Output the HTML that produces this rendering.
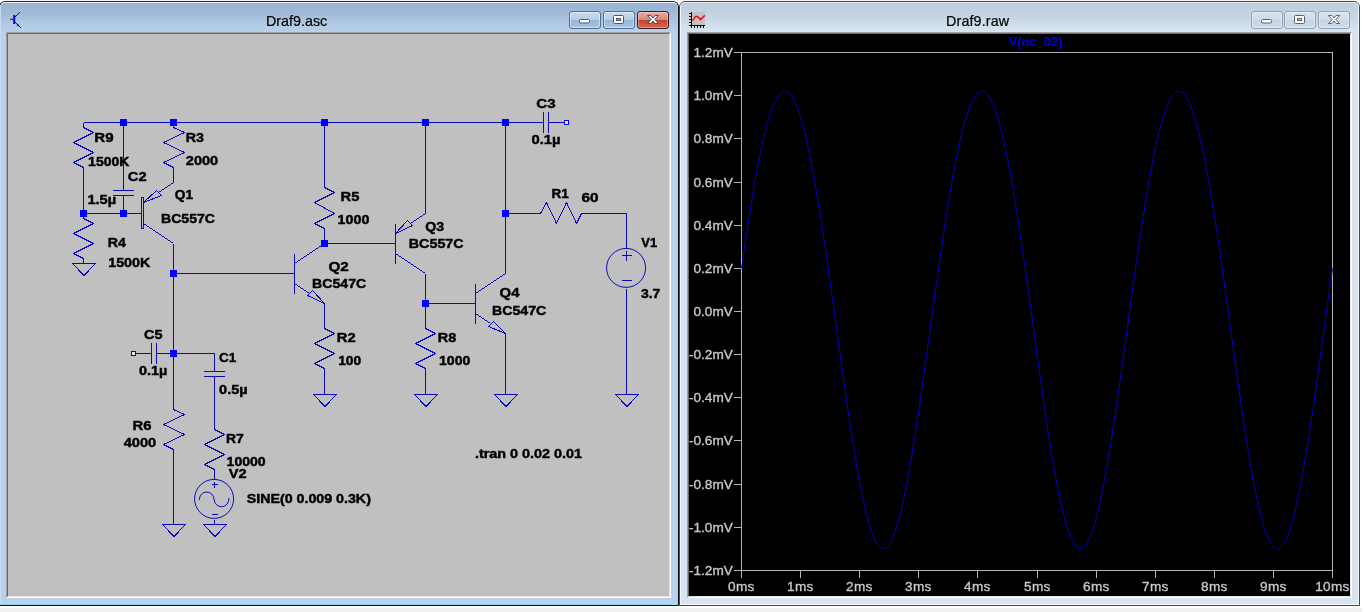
<!DOCTYPE html>
<html lang="en">
<head>
<meta charset="utf-8">
<title>LTspice - Draf9</title>
<style>
html,body{margin:0;padding:0;}
body{width:1364px;height:612px;overflow:hidden;position:relative;background:#fff;
 font-family:"Liberation Sans",sans-serif;}
#mdi{position:absolute;left:0;top:608px;width:1362px;height:4px;background:#f0f0f0;}
#mditop{position:absolute;left:0;top:0;width:1360px;height:1px;background:#f6f6f6;}
.win{position:absolute;top:1px;height:605px;box-sizing:border-box;border:1px solid #000;
 border-radius:6px 6px 0 0;overflow:hidden;}
#w1{left:-1px;width:680px;background:#b9d1ea;border-color:#26292d #101418 #101418;}
#w2{left:679px;width:681px;background:#d7e4f2;border-color:#45494f;}
.hl{position:absolute;left:0;top:0;right:0;bottom:0;border-radius:5px 5px 0 0;box-sizing:border-box;}
#w1 .hl{border:1px solid #8fd6f4;border-top-color:#eef5fb;border-left-color:#c8dcf0;border-right:1px solid #8fd6f4;}
#w2 .hl{border:1px solid #f4f8fc;border-top-color:#e6edf5;}
.tb{position:absolute;left:1px;right:1px;top:1px;height:29px;}
#w1 .tb{background:linear-gradient(#98b3d2 0%,#a0bad8 35%,#b0c9e4 70%,#bad1eb 100%);}
#w2 .tb{background:linear-gradient(#becddc 0%,#c5d3e1 40%,#d0deeb 75%,#d8e5f2 100%);}
.title{position:absolute;top:10.5px;font-size:14.3px;line-height:16px;color:#000;white-space:nowrap;-webkit-text-stroke:0.2px #000;}
.edge{position:absolute;top:30px;left:6px;width:665px;height:566px;box-sizing:border-box;
 border:1px solid;border-color:#a0a0a0 #fff #fff #a0a0a0;}
.edge>i{display:block;width:100%;height:100%;box-sizing:border-box;border:1px solid;
 border-color:#696969 #e3e3e3 #e3e3e3 #696969;}
#w2 .edge{left:7px;}
#w1 .edge>i{background:#c0c0c0;}
#w2 .edge>i{background:#000;}
.btn{position:absolute;top:9px;height:18px;box-sizing:border-box;border:1px solid;border-radius:3px;}
.btn svg{position:absolute;left:0;top:0;}
#w1 .btn{border-color:#4f6f96;background:linear-gradient(#c9dbef 0%,#b4cce6 48%,#9ab6d7 52%,#aac4e2 100%);
 box-shadow:inset 0 0 0 1px rgba(255,255,255,.45);}
#w1 .btn.x{border-color:#43161a;background:linear-gradient(#e9ac9f 0%,#db8674 48%,#c2452c 52%,#d06a4f 100%);
 box-shadow:inset 0 0 0 1px rgba(255,255,255,.35);}
#w2 .btn{border-color:#93a1b3;background:linear-gradient(#d6e2ee 0%,#cfdcea 48%,#c6d5e6 52%,#cedbea 100%);
 box-shadow:inset 0 0 0 1px rgba(255,255,255,.4);}
#ov{position:absolute;left:0;top:0;will-change:transform;}
.title{will-change:transform;}
</style>
</head>
<body>
<div id="mdi"></div>
<div id="mditop"></div>

<div class="win" id="w1">
 <div class="tb"></div>
 <div class="hl"></div>
 <svg style="position:absolute;left:9px;top:9px" width="16" height="20" viewBox="0 0 16 20">
  <g stroke="#0808c4" fill="none" stroke-width="1">
   <path d="M1 8.3H4.2"/><path d="M5.2 4V13" stroke-width="2"/>
   <path d="M6 6L11 1.2"/><path d="M6 11L12 17"/>
  </g>
  <path d="M10.6 15.8L7.4 14.4L9 12.6Z" fill="#0808c4"/>
 </svg>
 <div class="title" style="left:266px">Draf9.asc</div>
 <div class="btn" style="left:569px;width:32px">
  <svg width="30" height="16"><rect x="9.5" y="7.5" width="10" height="3.5" rx="1" fill="#fff" stroke="#49576a"/></svg></div>
 <div class="btn" style="left:603px;width:32px">
  <svg width="30" height="16"><rect x="9.5" y="3.5" width="10" height="8" rx="1" fill="#fff" stroke="#49576a"/>
  <rect x="12.5" y="6.5" width="4" height="2" fill="#8ea6c4" stroke="#49576a"/></svg></div>
 <div class="btn x" style="left:637px;width:32px">
  <svg width="30" height="16"><path d="M9.5 3.5h3.4l2.1 2.5 2.1-2.5h3.4l-3.7 4 3.7 4h-3.4l-2.1-2.5-2.1 2.5h-3.4l3.7-4z" fill="#fff" stroke="#4a4f5c" stroke-width="1" stroke-linejoin="round"/></svg></div>
 <div class="edge"><i></i></div>
</div>

<div class="win" id="w2">
 <div class="tb"></div>
 <div class="hl"></div>
 <svg style="position:absolute;left:9px;top:10px" width="17" height="17" viewBox="0 0 17 17" shape-rendering="crispEdges">
  <rect x="3" y="0" width="13" height="13" fill="#c3c3c3"/>
  <path d="M2.5 0V14M0 13.5H16" stroke="#000" fill="none"/>
  <path d="M0 1.5H2M0 4.5H2M0 7.5H2M0 10.5H2M2.5 14V16M5.5 14V16M8.5 14V16M11.5 14V16M14.5 14V16" stroke="#000" fill="none"/>
  <path d="M3.5 8.6L6.5 4.6L8.5 4.6L11.5 7.6L15.8 3.4" stroke="#e8101c" stroke-width="1.5" fill="none" shape-rendering="auto"/>
 </svg>
 <div class="title" style="left:266.4px;letter-spacing:0.15px">Draf9.raw</div>
 <div class="btn" style="left:571px;width:32px">
  <svg width="30" height="16"><rect x="9.5" y="7.5" width="10" height="3.5" rx="1" fill="#fff" stroke="#5c6370"/></svg></div>
 <div class="btn" style="left:604px;width:32px">
  <svg width="30" height="16"><rect x="9.5" y="3.5" width="10" height="8" rx="1" fill="#fff" stroke="#5c6370"/>
  <rect x="12.5" y="6.5" width="4" height="2" fill="#c3cfdd" stroke="#5c6370"/></svg></div>
 <div class="btn x" style="left:638px;width:32px">
  <svg width="30" height="16"><path d="M9.5 3.5h3.4l2.1 2.5 2.1-2.5h3.4l-3.7 4 3.7 4h-3.4l-2.1-2.5-2.1 2.5h-3.4l3.7-4z" fill="#fff" stroke="#5c6370" stroke-width="1" stroke-linejoin="round"/></svg></div>
 <div class="edge"><i></i></div>
</div>

<svg id="ov" width="1364" height="612" viewBox="0 0 1364 612">
<g fill="none" stroke="#0a0ab8" stroke-width="1" stroke-linejoin="bevel" shape-rendering="crispEdges">
<path d="M83.5 122.5 L525.5 122.5" />
<path d="M123.5 122.5 L123.5 172.5" />
<path d="M83.5 122.5 L83.5 127.5 L93.5 132.5 L73.5 142.5 L93.5 152.5 L73.5 162.5 L83.5 167.5 L83.5 172.5" />
<path d="M83.5 172.5 L83.5 213.5" />
<path d="M83.5 213.5 L133.5 213.5" />
<path d="M123.5 172.5 L123.5 190.5" />
<path d="M123.5 195.5 L123.5 213.5" />
<path d="M113.0 190.5 L134.0 190.5" />
<path d="M113.0 195.5 L134.0 195.5" />
<path d="M83.5 213.5 L83.5 218.5 L93.5 223.5 L73.5 233.5 L93.5 243.5 L73.5 253.5 L83.5 258.5 L83.5 263.5" />
<path d="M72.5 263.5 L95.5 263.5 L84.0 275.5Z" />
<path d="M173.5 122.5 L173.5 127.5 L184.5 132.5 L163.5 142.5 L184.5 152.5 L163.5 162.5 L173.5 167.5 L173.5 172.5" />
<path d="M173.5 172.5 L173.5 182.5" />
<path d="M133.5 213.5 L141.5 213.5" />
<rect x="141.5" y="197.5" width="2.0" height="31.0"/>
<path d="M158.5 192.5 L173.5 182.5" />
<path d="M143.5 223.5 L173.5 243.5" />
<path d="M143.5 202.5 L156.5 190.5 L161.5 195.5Z" />
<path d="M173.5 243.5 L173.5 404.5" />
<path d="M173.5 273.5 L284.5 273.5" />
<path d="M284.5 273.5 L294.5 273.5" />
<path d="M294.5 253.5 L294.5 293.5" />
<path d="M294.5 263.5 L324.5 243.5" />
<path d="M294.5 283.5 L309.5 293.5" />
<path d="M324.5 303.5 L307.5 295.5 L312.5 290.5Z" />
<path d="M324.5 122.5 L324.5 182.5" />
<path d="M324.5 182.5 L324.5 187.5 L334.5 192.5 L314.5 202.5 L334.5 213.5 L314.5 223.5 L324.5 228.5 L324.5 233.5" />
<path d="M324.5 233.5 L324.5 243.5" />
<path d="M324.5 243.5 L385.5 243.5" />
<path d="M385.5 243.5 L395.5 243.5" />
<path d="M395.5 223.5 L395.5 263.5" />
<path d="M410.5 223.5 L425.5 213.5" />
<path d="M395.5 253.5 L425.5 273.5" />
<path d="M395.5 233.5 L407.5 220.5 L412.5 225.5Z" />
<path d="M425.5 122.5 L425.5 213.5" />
<path d="M425.5 273.5 L425.5 323.5" />
<path d="M425.5 303.5 L465.5 303.5" />
<path d="M465.5 303.5 L475.5 303.5" />
<path d="M475.5 283.5 L475.5 323.5" />
<path d="M475.5 293.5 L505.5 273.5" />
<path d="M475.5 313.5 L490.5 323.5" />
<path d="M505.5 333.5 L488.5 326.5 L493.5 321.5Z" />
<path d="M505.5 122.5 L505.5 273.5" />
<path d="M505.5 333.5 L505.5 394.5" />
<path d="M494.5 394.5 L517.5 394.5 L506.0 406.5Z" />
<path d="M324.5 303.5 L324.5 323.5" />
<path d="M324.5 323.5 L324.5 328.5 L334.5 333.5 L314.5 343.5 L334.5 353.5 L314.5 363.5 L324.5 368.5 L324.5 373.5" />
<path d="M324.5 373.5 L324.5 394.5" />
<path d="M313.5 394.5 L336.5 394.5 L325.0 406.5Z" />
<path d="M425.5 323.5 L425.5 328.5 L435.5 333.5 L415.5 343.5 L435.5 353.5 L415.5 363.5 L425.5 368.5 L425.5 373.5" />
<path d="M425.5 373.5 L425.5 394.5" />
<path d="M414.5 394.5 L437.5 394.5 L426.0 406.5Z" />
<path d="M525.5 122.5 L543.5 122.5" />
<path d="M548.5 122.5 L566.5 122.5" />
<path d="M543.5 112.0 L543.5 133.0" />
<path d="M548.5 112.0 L548.5 133.0" />
<path d="M505.5 213.5 L535.5 213.5" />
<path d="M535.5 213.5 L540.5 213.5 L546.5 202.5 L556.5 223.5 L566.5 202.5 L576.5 223.5 L581.5 213.5 L586.5 213.5" />
<path d="M586.5 213.5 L626.5 213.5 L626.5 243.5" />
<circle cx="626.1" cy="267.9" r="19.5" shape-rendering="auto"/>
<path d="M626.5 243.5 L626.5 248.5" />
<path d="M626.5 288.5 L626.5 293.5" />
<path d="M621.5 255.5 L631.5 255.5" />
<path d="M626.5 250.5 L626.5 260.5" />
<path d="M621.5 280.5 L631.5 280.5" />
<path d="M626.5 293.5 L626.5 394.5" />
<path d="M615.5 394.5 L638.5 394.5 L627.0 406.5Z" />
<path d="M133.5 353.5 L151.5 353.5" />
<path d="M156.5 353.5 L173.5 353.5" />
<path d="M151.5 343.0 L151.5 364.0" />
<path d="M156.5 343.0 L156.5 364.0" />
<path d="M173.5 353.5 L214.5 353.5" />
<path d="M214.5 353.5 L214.5 371.5" />
<path d="M214.5 376.5 L214.5 394.5" />
<path d="M204.0 371.5 L225.0 371.5" />
<path d="M204.0 376.5 L225.0 376.5" />
<path d="M214.5 394.5 L214.5 424.5" />
<path d="M214.5 424.5 L214.5 429.5 L224.5 434.5 L204.5 444.5 L224.5 454.5 L204.5 464.5 L214.5 469.5 L214.5 474.5" />
<circle cx="214.1" cy="498.9" r="19.5" shape-rendering="auto"/>
<path d="M214.5 474.5 L214.5 479.5" />
<path d="M214.5 519.5 L214.5 524.5" />
<path d="M211.5 484.5 L217.5 484.5" />
<path d="M214.5 481.5 L214.5 487.5" />
<path d="M211.5 514.5 L217.5 514.5" />
<path shape-rendering="auto" d="M199.3 500.1 a7.4 7.8 0 1 1 14.8 -0.6 a7.4 8.0 0 1 0 14.8 -1.4"/>
<path d="M203.5 524.5 L226.5 524.5 L215.0 536.5Z" />
<path d="M173.5 404.5 L173.5 409.5 L184.5 414.5 L163.5 424.5 L184.5 434.5 L163.5 444.5 L173.5 449.5 L173.5 454.5" />
<path d="M173.5 454.5 L173.5 524.5" />
<path d="M162.5 524.5 L185.5 524.5 L174.0 536.5Z" />
<rect x="120" y="119" width="7" height="7" fill="#0000ff" stroke="none"/>
<rect x="170" y="119" width="7" height="7" fill="#0000ff" stroke="none"/>
<rect x="321" y="119" width="7" height="7" fill="#0000ff" stroke="none"/>
<rect x="422" y="119" width="7" height="7" fill="#0000ff" stroke="none"/>
<rect x="502" y="119" width="7" height="7" fill="#0000ff" stroke="none"/>
<rect x="80" y="210" width="7" height="7" fill="#0000ff" stroke="none"/>
<rect x="120" y="210" width="7" height="7" fill="#0000ff" stroke="none"/>
<rect x="170" y="270" width="7" height="7" fill="#0000ff" stroke="none"/>
<rect x="321" y="240" width="7" height="7" fill="#0000ff" stroke="none"/>
<rect x="422" y="300" width="7" height="7" fill="#0000ff" stroke="none"/>
<rect x="502" y="210" width="7" height="7" fill="#0000ff" stroke="none"/>
<rect x="170" y="350" width="7" height="7" fill="#0000ff" stroke="none"/>
<rect x="564.5" y="120.5" width="4" height="4" fill="#e8e8ff" stroke="#0000ff"/>
<rect x="131.5" y="351.5" width="4" height="4" fill="#e8e8ff" stroke="#0000ff"/>
</g>
<g font-family="'Liberation Sans',sans-serif" font-weight="bold" font-size="13.3px" fill="#000" stroke="#000" stroke-width="0.45" lengthAdjust="spacingAndGlyphs">
<text x="94.3" y="141.7" textLength="19.2" lengthAdjust="spacingAndGlyphs">R9</text>
<text x="88.1" y="165.5" textLength="41.3" lengthAdjust="spacingAndGlyphs">1500K</text>
<text x="185.8" y="141.7" textLength="18.2" lengthAdjust="spacingAndGlyphs">R3</text>
<text x="185.8" y="164.5" textLength="32.4" lengthAdjust="spacingAndGlyphs">2000</text>
<text x="127.8" y="181.4" textLength="18.8" lengthAdjust="spacingAndGlyphs">C2</text>
<text x="87.4" y="203.6" textLength="28.8" lengthAdjust="spacingAndGlyphs">1.5µ</text>
<text x="174.8" y="199.3" textLength="18.2" lengthAdjust="spacingAndGlyphs">Q1</text>
<text x="161.0" y="223.1" textLength="54.0" lengthAdjust="spacingAndGlyphs">BC557C</text>
<text x="107.8" y="247.3" textLength="18.2" lengthAdjust="spacingAndGlyphs">R4</text>
<text x="108.2" y="266.5" textLength="42.1" lengthAdjust="spacingAndGlyphs">1500K</text>
<text x="340.6" y="201.1" textLength="18.8" lengthAdjust="spacingAndGlyphs">R5</text>
<text x="337.6" y="224.0" textLength="31.8" lengthAdjust="spacingAndGlyphs">1000</text>
<text x="425.3" y="230.5" textLength="18.8" lengthAdjust="spacingAndGlyphs">Q3</text>
<text x="408.8" y="248.1" textLength="54.8" lengthAdjust="spacingAndGlyphs">BC557C</text>
<text x="328.5" y="271.4" textLength="20.3" lengthAdjust="spacingAndGlyphs">Q2</text>
<text x="312.0" y="287.6" textLength="54.2" lengthAdjust="spacingAndGlyphs">BC547C</text>
<text x="499.6" y="297.4" textLength="19.8" lengthAdjust="spacingAndGlyphs">Q4</text>
<text x="491.9" y="315.2" textLength="54.4" lengthAdjust="spacingAndGlyphs">BC547C</text>
<text x="336.8" y="342.1" textLength="18.8" lengthAdjust="spacingAndGlyphs">R2</text>
<text x="338.2" y="365.3" textLength="23.0" lengthAdjust="spacingAndGlyphs">100</text>
<text x="437.8" y="342.1" textLength="18.5" lengthAdjust="spacingAndGlyphs">R8</text>
<text x="439.0" y="365.3" textLength="31.3" lengthAdjust="spacingAndGlyphs">1000</text>
<text x="536.3" y="108.3" textLength="19.3" lengthAdjust="spacingAndGlyphs">C3</text>
<text x="531.5" y="144.3" textLength="29.1" lengthAdjust="spacingAndGlyphs">0.1µ</text>
<text x="551.6" y="198.3" textLength="17.2" lengthAdjust="spacingAndGlyphs">R1</text>
<text x="581.5" y="202.2" textLength="17.1" lengthAdjust="spacingAndGlyphs">60</text>
<text x="641.3" y="247.4" textLength="15.8" lengthAdjust="spacingAndGlyphs">V1</text>
<text x="640.9" y="297.6" textLength="19.4" lengthAdjust="spacingAndGlyphs">3.7</text>
<text x="144.0" y="338.9" textLength="18.4" lengthAdjust="spacingAndGlyphs">C5</text>
<text x="138.9" y="375.2" textLength="28.3" lengthAdjust="spacingAndGlyphs">0.1µ</text>
<text x="219.0" y="362.4" textLength="17.3" lengthAdjust="spacingAndGlyphs">C1</text>
<text x="219.1" y="393.7" textLength="28.5" lengthAdjust="spacingAndGlyphs">0.5µ</text>
<text x="132.5" y="429.6" textLength="19.0" lengthAdjust="spacingAndGlyphs">R6</text>
<text x="123.7" y="447.2" textLength="32.5" lengthAdjust="spacingAndGlyphs">4000</text>
<text x="225.9" y="443.1" textLength="17.8" lengthAdjust="spacingAndGlyphs">R7</text>
<text x="226.6" y="466.4" textLength="39.1" lengthAdjust="spacingAndGlyphs">10000</text>
<text x="228.8" y="478.4" textLength="17.8" lengthAdjust="spacingAndGlyphs">V2</text>
<text x="246.7" y="502.6" textLength="124.2" lengthAdjust="spacingAndGlyphs">SINE(0 0.009 0.3K)</text>
<text x="474.9" y="458.2" textLength="107.2" lengthAdjust="spacingAndGlyphs">.tran 0 0.02 0.01</text>
</g>
<g fill="none" stroke="#b4b4b4" stroke-width="1" shape-rendering="crispEdges">
<rect x="741.5" y="52.5" width="591" height="518"/>
<path d="M734 52.5H741"/>
<path d="M734 95.5H741"/>
<path d="M734 138.5H741"/>
<path d="M734 182.5H741"/>
<path d="M734 225.5H741"/>
<path d="M734 268.5H741"/>
<path d="M734 311.5H741"/>
<path d="M734 354.5H741"/>
<path d="M734 397.5H741"/>
<path d="M734 440.5H741"/>
<path d="M734 484.5H741"/>
<path d="M734 527.5H741"/>
<path d="M734 570.5H741"/>
<path d="M741.5 570V578"/>
<path d="M800.5 570V578"/>
<path d="M859.5 570V578"/>
<path d="M918.5 570V578"/>
<path d="M977.5 570V578"/>
<path d="M1037.5 570V578"/>
<path d="M1096.5 570V578"/>
<path d="M1155.5 570V578"/>
<path d="M1214.5 570V578"/>
<path d="M1273.5 570V578"/>
<path d="M1332.5 570V578"/>
</g>
<polyline fill="none" stroke="#0000d0" stroke-width="1" points="741.5,268.4 742.0,264.9 742.5,261.4 743.0,257.9 743.5,254.4 744.0,251.0 744.5,247.6 745.0,244.1 745.5,240.8 746.0,237.4 746.5,234.0 747.0,230.7 747.5,227.4 748.0,224.2 748.5,220.9 749.0,217.7 749.5,214.5 750.0,211.3 750.5,208.2 751.0,205.1 751.5,202.0 752.0,198.9 752.5,195.9 753.0,192.9 753.5,190.0 754.0,187.1 754.5,184.2 755.0,181.3 755.5,178.5 756.0,175.7 756.5,173.0 757.0,170.3 757.5,167.6 758.0,165.0 758.5,162.4 759.0,159.8 759.5,157.3 760.0,154.9 760.5,152.4 761.0,150.0 761.5,147.7 762.0,145.4 762.5,143.1 763.0,140.9 763.5,138.7 764.0,136.6 764.5,134.5 765.0,132.5 765.5,130.5 766.0,128.5 766.5,126.6 767.0,124.7 767.5,122.9 768.0,121.2 768.5,119.5 769.0,117.8 769.5,116.2 770.0,114.6 770.5,113.1 771.0,111.6 771.5,110.2 772.0,108.8 772.5,107.5 773.0,106.2 773.5,105.0 774.0,103.8 774.5,102.7 775.0,101.6 775.5,100.6 776.0,99.6 776.5,98.7 777.0,97.9 777.5,97.1 778.0,96.3 778.5,95.6 779.0,94.9 779.5,94.3 780.0,93.8 780.5,93.3 781.0,92.9 781.5,92.5 782.0,92.2 782.5,91.9 783.0,91.7 783.5,91.5 784.0,91.4 784.5,91.3 785.0,91.3 785.5,91.3 786.0,91.4 786.5,91.6 787.0,91.8 787.5,92.0 788.0,92.3 788.5,92.7 789.0,93.1 789.5,93.6 790.0,94.1 790.5,94.7 791.0,95.3 791.5,96.0 792.0,96.7 792.5,97.5 793.0,98.4 793.5,99.3 794.0,100.2 794.5,101.2 795.0,102.3 795.5,103.4 796.0,104.5 796.5,105.7 797.0,107.0 797.5,108.3 798.0,109.6 798.5,111.0 799.0,112.5 799.5,114.0 800.0,115.5 800.5,117.1 801.0,118.8 801.5,120.5 802.0,122.2 802.5,124.0 803.0,125.9 803.5,127.7 804.0,129.7 804.5,131.7 805.0,133.7 805.5,135.7 806.0,137.9 806.5,140.0 807.0,142.2 807.5,144.5 808.0,146.8 808.5,149.1 809.0,151.5 809.5,153.9 810.0,156.3 810.5,158.8 811.0,161.4 811.5,163.9 812.0,166.6 812.5,169.2 813.0,171.9 813.5,174.6 814.0,177.4 814.5,180.2 815.0,183.0 815.5,185.9 816.0,188.8 816.5,191.8 817.0,194.7 817.5,197.7 818.0,200.8 818.5,203.8 819.0,206.9 819.5,210.1 820.0,213.2 820.5,216.4 821.0,219.6 821.5,222.8 822.0,226.1 822.5,229.4 823.0,232.7 823.5,236.0 824.0,239.4 824.5,242.8 825.0,246.2 825.5,249.6 826.0,253.1 826.5,256.5 827.0,260.0 827.5,263.5 828.0,267.0 828.5,270.5 829.0,274.1 829.5,277.6 830.0,281.2 830.5,284.8 831.0,288.4 831.5,292.0 832.0,295.6 832.5,299.2 833.0,302.9 833.5,306.5 834.0,310.1 834.5,313.8 835.0,317.4 835.5,321.1 836.0,324.7 836.5,328.4 837.0,332.1 837.5,335.7 838.0,339.4 838.5,343.0 839.0,346.7 839.5,350.3 840.0,353.9 840.5,357.6 841.0,361.2 841.5,364.8 842.0,368.4 842.5,372.0 843.0,375.6 843.5,379.2 844.0,382.7 844.5,386.3 845.0,389.8 845.5,393.3 846.0,396.8 846.5,400.3 847.0,403.8 847.5,407.2 848.0,410.6 848.5,414.0 849.0,417.4 849.5,420.7 850.0,424.1 850.5,427.4 851.0,430.6 851.5,433.9 852.0,437.1 852.5,440.3 853.0,443.5 853.5,446.6 854.0,449.7 854.5,452.7 855.0,455.8 855.5,458.8 856.0,461.7 856.5,464.6 857.0,467.5 857.5,470.4 858.0,473.2 858.5,475.9 859.0,478.7 859.5,481.3 860.0,484.0 860.5,486.6 861.0,489.1 861.5,491.7 862.0,494.1 862.5,496.5 863.0,498.9 863.5,501.2 864.0,503.5 864.5,505.7 865.0,507.9 865.5,510.0 866.0,512.1 866.5,514.1 867.0,516.1 867.5,518.0 868.0,519.9 868.5,521.7 869.0,523.5 869.5,525.2 870.0,526.8 870.5,528.4 871.0,529.9 871.5,531.4 872.0,532.8 872.5,534.2 873.0,535.5 873.5,536.8 874.0,537.9 874.5,539.1 875.0,540.1 875.5,541.1 876.0,542.1 876.5,543.0 877.0,543.8 877.5,544.6 878.0,545.3 878.5,545.9 879.0,546.5 879.5,547.0 880.0,547.4 880.5,547.8 881.0,548.2 881.5,548.4 882.0,548.6 882.5,548.8 883.0,548.8 883.5,548.8 884.0,548.8 884.5,548.7 885.0,548.5 885.5,548.3 886.0,548.0 886.5,547.6 887.0,547.2 887.5,546.7 888.0,546.1 888.5,545.5 889.0,544.8 889.5,544.1 890.0,543.3 890.5,542.4 891.0,541.5 891.5,540.5 892.0,539.5 892.5,538.4 893.0,537.2 893.5,536.0 894.0,534.7 894.5,533.4 895.0,532.0 895.5,530.5 896.0,529.0 896.5,527.5 897.0,525.8 897.5,524.2 898.0,522.4 898.5,520.6 899.0,518.8 899.5,516.9 900.0,514.9 900.5,512.9 901.0,510.9 901.5,508.8 902.0,506.6 902.5,504.4 903.0,502.2 903.5,499.8 904.0,497.5 904.5,495.1 905.0,492.6 905.5,490.2 906.0,487.6 906.5,485.0 907.0,482.4 907.5,479.7 908.0,477.0 908.5,474.3 909.0,471.5 909.5,468.7 910.0,465.8 910.5,462.9 911.0,459.9 911.5,457.0 912.0,454.0 912.5,450.9 913.0,447.8 913.5,444.7 914.0,441.6 914.5,438.4 915.0,435.2 915.5,431.9 916.0,428.7 916.5,425.4 917.0,422.1 917.5,418.7 918.0,415.4 918.5,412.0 919.0,408.6 919.5,405.1 920.0,401.7 920.5,398.2 921.0,394.7 921.5,391.2 922.0,387.7 922.5,384.2 923.0,380.6 923.5,377.0 924.0,373.5 924.5,369.9 925.0,366.3 925.5,362.7 926.0,359.0 926.5,355.4 927.0,351.8 927.5,348.1 928.0,344.5 928.5,340.8 929.0,337.2 929.5,333.5 930.0,329.9 930.5,326.2 931.0,322.5 931.5,318.9 932.0,315.2 932.5,311.6 933.0,307.9 933.5,304.3 934.0,300.7 934.5,297.1 935.0,293.4 935.5,289.8 936.0,286.2 936.5,282.6 937.0,279.1 937.5,275.5 938.0,272.0 938.5,268.4 939.0,264.9 939.5,261.4 940.0,257.9 940.5,254.4 941.0,251.0 941.5,247.6 942.0,244.1 942.5,240.8 943.0,237.4 943.5,234.0 944.0,230.7 944.5,227.4 945.0,224.2 945.5,220.9 946.0,217.7 946.5,214.5 947.0,211.3 947.5,208.2 948.0,205.1 948.5,202.0 949.0,198.9 949.5,195.9 950.0,192.9 950.5,190.0 951.0,187.1 951.5,184.2 952.0,181.3 952.5,178.5 953.0,175.7 953.5,173.0 954.0,170.3 954.5,167.6 955.0,165.0 955.5,162.4 956.0,159.8 956.5,157.3 957.0,154.9 957.5,152.4 958.0,150.0 958.5,147.7 959.0,145.4 959.5,143.1 960.0,140.9 960.5,138.7 961.0,136.6 961.5,134.5 962.0,132.5 962.5,130.5 963.0,128.5 963.5,126.6 964.0,124.7 964.5,122.9 965.0,121.2 965.5,119.5 966.0,117.8 966.5,116.2 967.0,114.6 967.5,113.1 968.0,111.6 968.5,110.2 969.0,108.8 969.5,107.5 970.0,106.2 970.5,105.0 971.0,103.8 971.5,102.7 972.0,101.6 972.5,100.6 973.0,99.6 973.5,98.7 974.0,97.9 974.5,97.1 975.0,96.3 975.5,95.6 976.0,94.9 976.5,94.3 977.0,93.8 977.5,93.3 978.0,92.9 978.5,92.5 979.0,92.2 979.5,91.9 980.0,91.7 980.5,91.5 981.0,91.4 981.5,91.3 982.0,91.3 982.5,91.3 983.0,91.4 983.5,91.6 984.0,91.8 984.5,92.0 985.0,92.3 985.5,92.7 986.0,93.1 986.5,93.6 987.0,94.1 987.5,94.7 988.0,95.3 988.5,96.0 989.0,96.7 989.5,97.5 990.0,98.4 990.5,99.3 991.0,100.2 991.5,101.2 992.0,102.3 992.5,103.4 993.0,104.5 993.5,105.7 994.0,107.0 994.5,108.3 995.0,109.6 995.5,111.0 996.0,112.5 996.5,114.0 997.0,115.5 997.5,117.1 998.0,118.8 998.5,120.5 999.0,122.2 999.5,124.0 1000.0,125.9 1000.5,127.7 1001.0,129.7 1001.5,131.7 1002.0,133.7 1002.5,135.7 1003.0,137.9 1003.5,140.0 1004.0,142.2 1004.5,144.5 1005.0,146.8 1005.5,149.1 1006.0,151.5 1006.5,153.9 1007.0,156.3 1007.5,158.8 1008.0,161.4 1008.5,163.9 1009.0,166.6 1009.5,169.2 1010.0,171.9 1010.5,174.6 1011.0,177.4 1011.5,180.2 1012.0,183.0 1012.5,185.9 1013.0,188.8 1013.5,191.8 1014.0,194.7 1014.5,197.7 1015.0,200.8 1015.5,203.8 1016.0,206.9 1016.5,210.1 1017.0,213.2 1017.5,216.4 1018.0,219.6 1018.5,222.8 1019.0,226.1 1019.5,229.4 1020.0,232.7 1020.5,236.0 1021.0,239.4 1021.5,242.8 1022.0,246.2 1022.5,249.6 1023.0,253.1 1023.5,256.5 1024.0,260.0 1024.5,263.5 1025.0,267.0 1025.5,270.5 1026.0,274.1 1026.5,277.6 1027.0,281.2 1027.5,284.8 1028.0,288.4 1028.5,292.0 1029.0,295.6 1029.5,299.2 1030.0,302.9 1030.5,306.5 1031.0,310.1 1031.5,313.8 1032.0,317.4 1032.5,321.1 1033.0,324.7 1033.5,328.4 1034.0,332.1 1034.5,335.7 1035.0,339.4 1035.5,343.0 1036.0,346.7 1036.5,350.3 1037.0,353.9 1037.5,357.6 1038.0,361.2 1038.5,364.8 1039.0,368.4 1039.5,372.0 1040.0,375.6 1040.5,379.2 1041.0,382.7 1041.5,386.3 1042.0,389.8 1042.5,393.3 1043.0,396.8 1043.5,400.3 1044.0,403.8 1044.5,407.2 1045.0,410.6 1045.5,414.0 1046.0,417.4 1046.5,420.7 1047.0,424.1 1047.5,427.4 1048.0,430.6 1048.5,433.9 1049.0,437.1 1049.5,440.3 1050.0,443.5 1050.5,446.6 1051.0,449.7 1051.5,452.7 1052.0,455.8 1052.5,458.8 1053.0,461.7 1053.5,464.6 1054.0,467.5 1054.5,470.4 1055.0,473.2 1055.5,475.9 1056.0,478.7 1056.5,481.3 1057.0,484.0 1057.5,486.6 1058.0,489.1 1058.5,491.7 1059.0,494.1 1059.5,496.5 1060.0,498.9 1060.5,501.2 1061.0,503.5 1061.5,505.7 1062.0,507.9 1062.5,510.0 1063.0,512.1 1063.5,514.1 1064.0,516.1 1064.5,518.0 1065.0,519.9 1065.5,521.7 1066.0,523.5 1066.5,525.2 1067.0,526.8 1067.5,528.4 1068.0,529.9 1068.5,531.4 1069.0,532.8 1069.5,534.2 1070.0,535.5 1070.5,536.8 1071.0,537.9 1071.5,539.1 1072.0,540.1 1072.5,541.1 1073.0,542.1 1073.5,543.0 1074.0,543.8 1074.5,544.6 1075.0,545.3 1075.5,545.9 1076.0,546.5 1076.5,547.0 1077.0,547.4 1077.5,547.8 1078.0,548.2 1078.5,548.4 1079.0,548.6 1079.5,548.8 1080.0,548.8 1080.5,548.8 1081.0,548.8 1081.5,548.7 1082.0,548.5 1082.5,548.3 1083.0,548.0 1083.5,547.6 1084.0,547.2 1084.5,546.7 1085.0,546.1 1085.5,545.5 1086.0,544.8 1086.5,544.1 1087.0,543.3 1087.5,542.4 1088.0,541.5 1088.5,540.5 1089.0,539.5 1089.5,538.4 1090.0,537.2 1090.5,536.0 1091.0,534.7 1091.5,533.4 1092.0,532.0 1092.5,530.5 1093.0,529.0 1093.5,527.5 1094.0,525.8 1094.5,524.2 1095.0,522.4 1095.5,520.6 1096.0,518.8 1096.5,516.9 1097.0,514.9 1097.5,512.9 1098.0,510.9 1098.5,508.8 1099.0,506.6 1099.5,504.4 1100.0,502.2 1100.5,499.8 1101.0,497.5 1101.5,495.1 1102.0,492.6 1102.5,490.2 1103.0,487.6 1103.5,485.0 1104.0,482.4 1104.5,479.7 1105.0,477.0 1105.5,474.3 1106.0,471.5 1106.5,468.7 1107.0,465.8 1107.5,462.9 1108.0,459.9 1108.5,457.0 1109.0,454.0 1109.5,450.9 1110.0,447.8 1110.5,444.7 1111.0,441.6 1111.5,438.4 1112.0,435.2 1112.5,431.9 1113.0,428.7 1113.5,425.4 1114.0,422.1 1114.5,418.7 1115.0,415.4 1115.5,412.0 1116.0,408.6 1116.5,405.1 1117.0,401.7 1117.5,398.2 1118.0,394.7 1118.5,391.2 1119.0,387.7 1119.5,384.2 1120.0,380.6 1120.5,377.0 1121.0,373.5 1121.5,369.9 1122.0,366.3 1122.5,362.7 1123.0,359.0 1123.5,355.4 1124.0,351.8 1124.5,348.1 1125.0,344.5 1125.5,340.8 1126.0,337.2 1126.5,333.5 1127.0,329.9 1127.5,326.2 1128.0,322.5 1128.5,318.9 1129.0,315.2 1129.5,311.6 1130.0,307.9 1130.5,304.3 1131.0,300.7 1131.5,297.1 1132.0,293.4 1132.5,289.8 1133.0,286.2 1133.5,282.6 1134.0,279.1 1134.5,275.5 1135.0,272.0 1135.5,268.4 1136.0,264.9 1136.5,261.4 1137.0,257.9 1137.5,254.4 1138.0,251.0 1138.5,247.6 1139.0,244.1 1139.5,240.8 1140.0,237.4 1140.5,234.0 1141.0,230.7 1141.5,227.4 1142.0,224.2 1142.5,220.9 1143.0,217.7 1143.5,214.5 1144.0,211.3 1144.5,208.2 1145.0,205.1 1145.5,202.0 1146.0,198.9 1146.5,195.9 1147.0,192.9 1147.5,190.0 1148.0,187.1 1148.5,184.2 1149.0,181.3 1149.5,178.5 1150.0,175.7 1150.5,173.0 1151.0,170.3 1151.5,167.6 1152.0,165.0 1152.5,162.4 1153.0,159.8 1153.5,157.3 1154.0,154.9 1154.5,152.4 1155.0,150.0 1155.5,147.7 1156.0,145.4 1156.5,143.1 1157.0,140.9 1157.5,138.7 1158.0,136.6 1158.5,134.5 1159.0,132.5 1159.5,130.5 1160.0,128.5 1160.5,126.6 1161.0,124.7 1161.5,122.9 1162.0,121.2 1162.5,119.5 1163.0,117.8 1163.5,116.2 1164.0,114.6 1164.5,113.1 1165.0,111.6 1165.5,110.2 1166.0,108.8 1166.5,107.5 1167.0,106.2 1167.5,105.0 1168.0,103.8 1168.5,102.7 1169.0,101.6 1169.5,100.6 1170.0,99.6 1170.5,98.7 1171.0,97.9 1171.5,97.1 1172.0,96.3 1172.5,95.6 1173.0,94.9 1173.5,94.3 1174.0,93.8 1174.5,93.3 1175.0,92.9 1175.5,92.5 1176.0,92.2 1176.5,91.9 1177.0,91.7 1177.5,91.5 1178.0,91.4 1178.5,91.3 1179.0,91.3 1179.5,91.3 1180.0,91.4 1180.5,91.6 1181.0,91.8 1181.5,92.0 1182.0,92.3 1182.5,92.7 1183.0,93.1 1183.5,93.6 1184.0,94.1 1184.5,94.7 1185.0,95.3 1185.5,96.0 1186.0,96.7 1186.5,97.5 1187.0,98.4 1187.5,99.3 1188.0,100.2 1188.5,101.2 1189.0,102.3 1189.5,103.4 1190.0,104.5 1190.5,105.7 1191.0,107.0 1191.5,108.3 1192.0,109.6 1192.5,111.0 1193.0,112.5 1193.5,114.0 1194.0,115.5 1194.5,117.1 1195.0,118.8 1195.5,120.5 1196.0,122.2 1196.5,124.0 1197.0,125.9 1197.5,127.7 1198.0,129.7 1198.5,131.7 1199.0,133.7 1199.5,135.7 1200.0,137.9 1200.5,140.0 1201.0,142.2 1201.5,144.5 1202.0,146.8 1202.5,149.1 1203.0,151.5 1203.5,153.9 1204.0,156.3 1204.5,158.8 1205.0,161.4 1205.5,163.9 1206.0,166.6 1206.5,169.2 1207.0,171.9 1207.5,174.6 1208.0,177.4 1208.5,180.2 1209.0,183.0 1209.5,185.9 1210.0,188.8 1210.5,191.8 1211.0,194.7 1211.5,197.7 1212.0,200.8 1212.5,203.8 1213.0,206.9 1213.5,210.1 1214.0,213.2 1214.5,216.4 1215.0,219.6 1215.5,222.8 1216.0,226.1 1216.5,229.4 1217.0,232.7 1217.5,236.0 1218.0,239.4 1218.5,242.8 1219.0,246.2 1219.5,249.6 1220.0,253.1 1220.5,256.5 1221.0,260.0 1221.5,263.5 1222.0,267.0 1222.5,270.5 1223.0,274.1 1223.5,277.6 1224.0,281.2 1224.5,284.8 1225.0,288.4 1225.5,292.0 1226.0,295.6 1226.5,299.2 1227.0,302.9 1227.5,306.5 1228.0,310.1 1228.5,313.8 1229.0,317.4 1229.5,321.1 1230.0,324.7 1230.5,328.4 1231.0,332.1 1231.5,335.7 1232.0,339.4 1232.5,343.0 1233.0,346.7 1233.5,350.3 1234.0,353.9 1234.5,357.6 1235.0,361.2 1235.5,364.8 1236.0,368.4 1236.5,372.0 1237.0,375.6 1237.5,379.2 1238.0,382.7 1238.5,386.3 1239.0,389.8 1239.5,393.3 1240.0,396.8 1240.5,400.3 1241.0,403.8 1241.5,407.2 1242.0,410.6 1242.5,414.0 1243.0,417.4 1243.5,420.7 1244.0,424.1 1244.5,427.4 1245.0,430.6 1245.5,433.9 1246.0,437.1 1246.5,440.3 1247.0,443.5 1247.5,446.6 1248.0,449.7 1248.5,452.7 1249.0,455.8 1249.5,458.8 1250.0,461.7 1250.5,464.6 1251.0,467.5 1251.5,470.4 1252.0,473.2 1252.5,475.9 1253.0,478.7 1253.5,481.3 1254.0,484.0 1254.5,486.6 1255.0,489.1 1255.5,491.7 1256.0,494.1 1256.5,496.5 1257.0,498.9 1257.5,501.2 1258.0,503.5 1258.5,505.7 1259.0,507.9 1259.5,510.0 1260.0,512.1 1260.5,514.1 1261.0,516.1 1261.5,518.0 1262.0,519.9 1262.5,521.7 1263.0,523.5 1263.5,525.2 1264.0,526.8 1264.5,528.4 1265.0,529.9 1265.5,531.4 1266.0,532.8 1266.5,534.2 1267.0,535.5 1267.5,536.8 1268.0,537.9 1268.5,539.1 1269.0,540.1 1269.5,541.1 1270.0,542.1 1270.5,543.0 1271.0,543.8 1271.5,544.6 1272.0,545.3 1272.5,545.9 1273.0,546.5 1273.5,547.0 1274.0,547.4 1274.5,547.8 1275.0,548.2 1275.5,548.4 1276.0,548.6 1276.5,548.8 1277.0,548.8 1277.5,548.8 1278.0,548.8 1278.5,548.7 1279.0,548.5 1279.5,548.3 1280.0,548.0 1280.5,547.6 1281.0,547.2 1281.5,546.7 1282.0,546.1 1282.5,545.5 1283.0,544.8 1283.5,544.1 1284.0,543.3 1284.5,542.4 1285.0,541.5 1285.5,540.5 1286.0,539.5 1286.5,538.4 1287.0,537.2 1287.5,536.0 1288.0,534.7 1288.5,533.4 1289.0,532.0 1289.5,530.5 1290.0,529.0 1290.5,527.5 1291.0,525.8 1291.5,524.2 1292.0,522.4 1292.5,520.6 1293.0,518.8 1293.5,516.9 1294.0,514.9 1294.5,512.9 1295.0,510.9 1295.5,508.8 1296.0,506.6 1296.5,504.4 1297.0,502.2 1297.5,499.8 1298.0,497.5 1298.5,495.1 1299.0,492.6 1299.5,490.2 1300.0,487.6 1300.5,485.0 1301.0,482.4 1301.5,479.7 1302.0,477.0 1302.5,474.3 1303.0,471.5 1303.5,468.7 1304.0,465.8 1304.5,462.9 1305.0,459.9 1305.5,457.0 1306.0,454.0 1306.5,450.9 1307.0,447.8 1307.5,444.7 1308.0,441.6 1308.5,438.4 1309.0,435.2 1309.5,431.9 1310.0,428.7 1310.5,425.4 1311.0,422.1 1311.5,418.7 1312.0,415.4 1312.5,412.0 1313.0,408.6 1313.5,405.1 1314.0,401.7 1314.5,398.2 1315.0,394.7 1315.5,391.2 1316.0,387.7 1316.5,384.2 1317.0,380.6 1317.5,377.0 1318.0,373.5 1318.5,369.9 1319.0,366.3 1319.5,362.7 1320.0,359.0 1320.5,355.4 1321.0,351.8 1321.5,348.1 1322.0,344.5 1322.5,340.8 1323.0,337.2 1323.5,333.5 1324.0,329.9 1324.5,326.2 1325.0,322.5 1325.5,318.9 1326.0,315.2 1326.5,311.6 1327.0,307.9 1327.5,304.3 1328.0,300.7 1328.5,297.1 1329.0,293.4 1329.5,289.8 1330.0,286.2 1330.5,282.6 1331.0,279.1 1331.5,275.5 1332.0,272.0 1332.5,268.4"/>
<g font-family="'Liberation Sans',sans-serif" font-size="13.6px" fill="#c8c8c8" stroke="#c8c8c8" stroke-width="0.35">
<text x="732.8" y="57.0" text-anchor="end">1.2mV</text>
<text x="732.8" y="100.0" text-anchor="end">1.0mV</text>
<text x="732.8" y="143.0" text-anchor="end">0.8mV</text>
<text x="732.8" y="187.0" text-anchor="end">0.6mV</text>
<text x="732.8" y="230.0" text-anchor="end">0.4mV</text>
<text x="732.8" y="273.0" text-anchor="end">0.2mV</text>
<text x="732.8" y="316.0" text-anchor="end">0.0mV</text>
<text x="732.8" y="359.0" text-anchor="end">-0.2mV</text>
<text x="732.8" y="402.0" text-anchor="end">-0.4mV</text>
<text x="732.8" y="445.0" text-anchor="end">-0.6mV</text>
<text x="732.8" y="489.0" text-anchor="end">-0.8mV</text>
<text x="732.8" y="532.0" text-anchor="end">-1.0mV</text>
<text x="732.8" y="575.0" text-anchor="end">-1.2mV</text>
<text x="741.4" y="590.7" text-anchor="middle" letter-spacing="0.3">0ms</text>
<text x="800.4" y="590.7" text-anchor="middle" letter-spacing="0.3">1ms</text>
<text x="859.4" y="590.7" text-anchor="middle" letter-spacing="0.3">2ms</text>
<text x="918.4" y="590.7" text-anchor="middle" letter-spacing="0.3">3ms</text>
<text x="977.4" y="590.7" text-anchor="middle" letter-spacing="0.3">4ms</text>
<text x="1037.4" y="590.7" text-anchor="middle" letter-spacing="0.3">5ms</text>
<text x="1096.4" y="590.7" text-anchor="middle" letter-spacing="0.3">6ms</text>
<text x="1155.4" y="590.7" text-anchor="middle" letter-spacing="0.3">7ms</text>
<text x="1214.4" y="590.7" text-anchor="middle" letter-spacing="0.3">8ms</text>
<text x="1273.4" y="590.7" text-anchor="middle" letter-spacing="0.3">9ms</text>
<text x="1332.4" y="590.7" text-anchor="middle" letter-spacing="0.3">10ms</text>
</g>
<text x="1035.5" y="46.4" text-anchor="middle" font-family="'Liberation Sans',sans-serif" font-weight="bold" font-size="13px" fill="#0000e6" textLength="54" lengthAdjust="spacingAndGlyphs">V(nc_02)</text>
</svg>
</body>
</html>
